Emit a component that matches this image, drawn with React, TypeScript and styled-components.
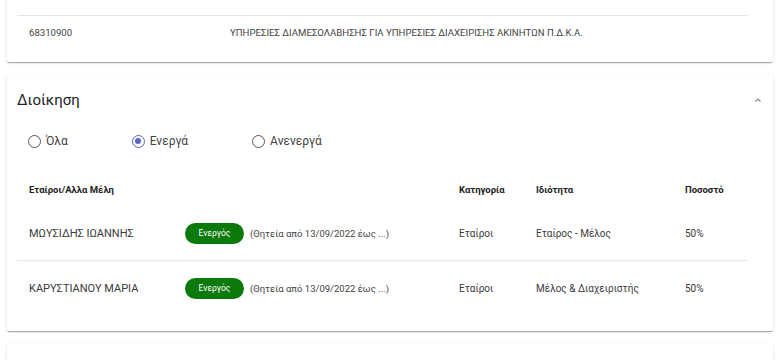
import React, { useState } from 'react';
import styled, { createGlobalStyle } from 'styled-components';

const GlobalStyle = createGlobalStyle`
  html, body {
    margin: 0;
    padding: 0;
    background: #fff;
    font-family: Roboto, 'Noto Sans', 'Liberation Sans', sans-serif;
    color: #3a3a3a;
    overflow: hidden;
  }
`;

const Page = styled.div`
  padding: 0 8px 0 7px;
  display: flex;
  flex-direction: column;
  gap: 13px;
  /* scroll offset: the first card starts above the viewport */
  margin-top: -30px;
`;

const Card = styled.section`
  background: #fff;
  border-radius: 2px;
  box-shadow: 0 2px 1px -1px rgba(0, 0, 0, 0.2), 0 1px 1px 0 rgba(0, 0, 0, 0.14),
    0 1px 3px 0 rgba(0, 0, 0, 0.12);
  padding: 0 25px 0 10px;
`;

const KadTable = styled.div`
  padding-top: 45px;
  padding-bottom: 14px;
`;

const KadRow = styled.div`
  display: grid;
  grid-template-columns: 201px 1fr;
  align-items: center;
  height: 32px;
  padding: 0 12px;
  border-top: 1px solid #e4e4e4;
  font-size: 9.6px;
  color: #444;
`;

const Header = styled.div`
  display: flex;
  align-items: center;
  justify-content: space-between;
  height: 50px;
`;

const Title = styled.h2`
  margin: 0;
  font-size: 15px;
  font-weight: 400;
  color: #222;
`;

const Chevron = styled.button`
  border: none;
  background: none;
  padding: 0;
  margin-right: -20px;
  width: 20px;
  height: 20px;
  display: flex;
  align-items: center;
  justify-content: center;
  cursor: pointer;
`;

const RadioGroup = styled.div`
  display: flex;
  gap: 64px;
  padding: 0 11px;
  height: 32px;
  align-items: center;
`;

const RadioLabel = styled.label`
  display: flex;
  align-items: center;
  gap: 5px;
  font-size: 12px;
  color: #444;
  cursor: pointer;
`;

const RadioCircle = styled.span<{ checked: boolean }>`
  box-sizing: border-box;
  width: 13px;
  height: 13px;
  border-radius: 50%;
  border: 1.5px solid ${({ checked }) => (checked ? '#5466c7' : '#555')};
  display: flex;
  align-items: center;
  justify-content: center;

  &::after {
    content: '';
    width: 6px;
    height: 6px;
    border-radius: 50%;
    background: ${({ checked }) => (checked ? '#5466c7' : 'transparent')};
  }
`;

const Table = styled.div`
  margin-top: 15px;
  padding-bottom: 16px;
`;

const Columns = `156px 274px 77px 149px 1fr`;

const HeadRow = styled.div`
  display: grid;
  grid-template-columns: ${Columns};
  align-items: center;
  height: 34px;
  padding: 0 12px;
  font-size: 9.5px;
  font-weight: 700;
  color: #222;
`;

const HeadSpan = styled.span`
  grid-column: span 2;
`;

const Row = styled.div<{ last?: boolean }>`
  display: grid;
  grid-template-columns: ${Columns};
  align-items: center;
  height: 54px;
  padding: 0 12px;
  font-size: 10px;
  color: #3a3a3a;
  border-bottom: ${({ last }) => (last ? 'none' : '1px solid #e6e6e6')};
`;

const Name = styled.span`
  font-size: 11px;
`;

const Term = styled.span`
  display: flex;
  align-items: center;
  gap: 6px;
  font-size: 9.5px;
  color: #444;
`;

const Badge = styled.span`
  display: inline-flex;
  align-items: center;
  justify-content: center;
  width: 59px;
  height: 21px;
  border-radius: 11px;
  background: #0b7a0b;
  color: #fff;
  font-size: 8.5px;
`;

const Cell = styled.span`
  font-size: 10px;
`;

const EmptyCard = styled(Card)`
  height: 40px;
`;

const members = [
  { name: 'ΜΩΥΣΙΔΗΣ ΙΩΑΝΝΗΣ', category: 'Εταίροι', role: 'Εταίρος - Μέλος', share: '50%' },
  { name: 'ΚΑΡΥΣΤΙΑΝΟΥ ΜΑΡΙΑ', category: 'Εταίροι', role: 'Μέλος & Διαχειριστής', share: '50%' },
];

const filters = ['Όλα', 'Ενεργά', 'Ανενεργά'];

const App = () => {
  const [filter, setFilter] = useState('Ενεργά');

  return (
    <>
      <GlobalStyle />
      <Page>
        <Card>
          <KadTable>
            <KadRow>
              <span>68310900</span>
              <span>ΥΠΗΡΕΣΙΕΣ ΔΙΑΜΕΣΟΛΑΒΗΣΗΣ ΓΙΑ ΥΠΗΡΕΣΙΕΣ ΔΙΑΧΕΙΡΙΣΗΣ ΑΚΙΝΗΤΩΝ Π.Δ.Κ.Α.</span>
            </KadRow>
          </KadTable>
        </Card>

        <Card>
          <Header>
            <Title>Διοίκηση</Title>
            <Chevron aria-label="collapse">
              <svg width="10" height="10" viewBox="0 0 10 10">
                <polyline points="2.5,6.5 5,4 7.5,6.5" fill="none" stroke="#888" strokeWidth="1.2" />
              </svg>
            </Chevron>
          </Header>

          <RadioGroup>
            {filters.map((f) => (
              <RadioLabel key={f} onClick={() => setFilter(f)}>
                <RadioCircle checked={filter === f} />
                {f}
              </RadioLabel>
            ))}
          </RadioGroup>

          <Table>
            <HeadRow>
              <HeadSpan>Εταίροι/Αλλα Μέλη</HeadSpan>
              <span>Κατηγορία</span>
              <span>Ιδιότητα</span>
              <span>Ποσοστό</span>
            </HeadRow>
            {members.map((m, i) => (
              <Row key={m.name} last={i === members.length - 1}>
                <Name>{m.name}</Name>
                <Term>
                  <Badge>Ενεργός</Badge>
                  (Θητεία από 13/09/2022 έως ...)
                </Term>
                <Cell>{m.category}</Cell>
                <Cell>{m.role}</Cell>
                <Cell>{m.share}</Cell>
              </Row>
            ))}
          </Table>
        </Card>

        <EmptyCard />
      </Page>
    </>
  );
};

export default App;
